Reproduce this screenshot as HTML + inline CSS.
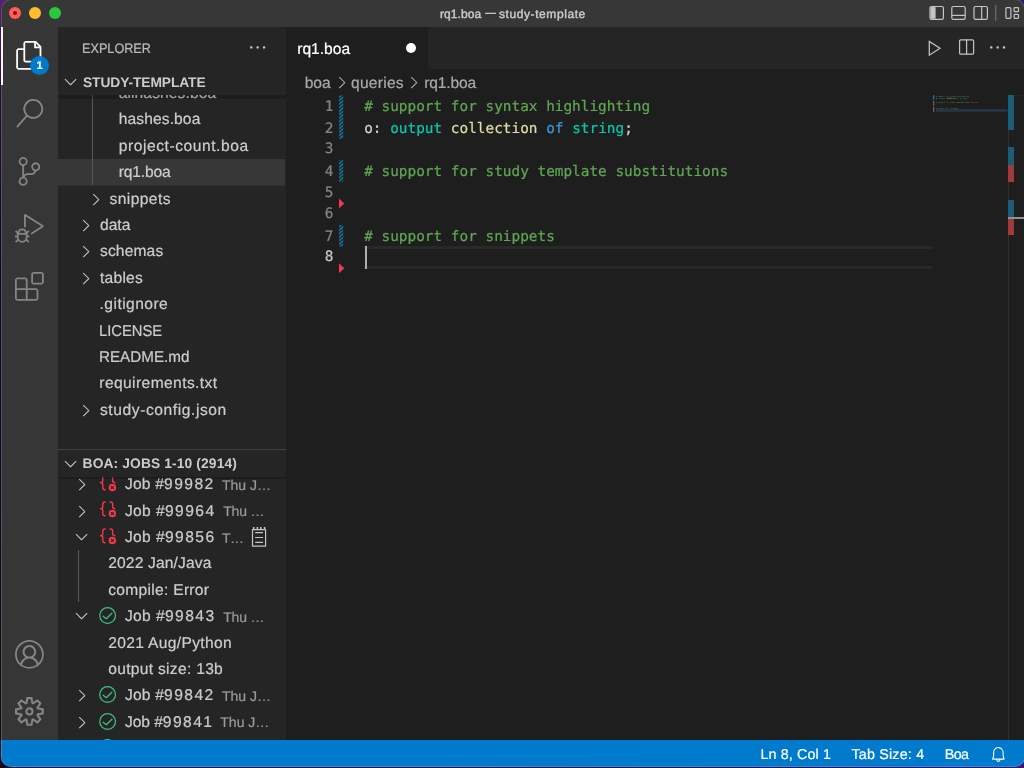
<!DOCTYPE html>
<html lang="en">
<head>
<meta charset="utf-8">
<title>rq1.boa — study-template</title>
<style>
*{box-sizing:border-box;margin:0;padding:0}
html,body{width:1024px;height:768px;overflow:hidden}
body{background:linear-gradient(180deg,#5c1b82 0%,#4a1570 4%,#2a0a45 12%,#16002a 35%,#120a1a 100%);font-family:"Liberation Sans",Arial,sans-serif;font-size:15.6px;color:#ccc;position:relative;-webkit-text-stroke:.22px;text-rendering:geometricPrecision}
.abs{position:absolute}
#win{position:absolute;left:1px;top:-1px;width:1024px;height:768px;border-radius:10px;overflow:hidden;background:#1e1e1e}
#w{left:-1px;top:1px;width:1024px;height:768px;will-change:transform}
#rim{position:absolute;left:1px;top:-1px;width:1024px;height:768px;border-radius:10px;box-shadow:inset 0 0 0 1px rgba(255,255,255,.16);pointer-events:none;z-index:50}
svg{position:absolute;overflow:visible}
.t{position:absolute;white-space:pre;line-height:20px;height:20px}
#title{left:0;top:-1px;width:1025px;height:28px;background:#373737}
#title>*{margin-top:1px}
.tl{position:absolute;top:7px;width:12px;height:12px;border-radius:50%}
.tt{top:3.6px;font-size:12px;letter-spacing:.1px;color:#ccc;-webkit-text-stroke:.4px #ccc}
#act{left:0;top:27px;width:58px;height:713px;background:#363636}
#side{left:58px;top:27px;width:228px;height:713px;background:#252526;overflow:hidden}
.row{position:absolute;left:0;width:228px;height:26.4px}
.row .t{top:1.4px;line-height:26.4px;height:26.4px}
.row.sel{background:#373738;width:227px}
.row .d{font-size:14px;color:#9a9a9a;top:1.1px}
.n{letter-spacing:1.45px}
.hdr{font-weight:700;font-size:13.8px;color:#ccc;-webkit-text-stroke:0}
.shadow{background:rgba(0,0,0,.2)}
#tabs{left:286px;top:27px;width:738px;height:42px;background:#252526}
#tab{left:0;top:0;width:142px;height:42px;background:#1e1e1e}
#crumbs{left:286px;top:69px;width:738px;height:26.4px;background:#1e1e1e;color:#a9a9a9}
#code{left:286px;top:95px;width:738px;height:645px;background:#1e1e1e}
.ln{position:absolute;left:-.5px;width:48px;text-align:right;font-family:"DejaVu Sans Mono","Liberation Mono",monospace;font-size:14.4px;color:#858585;line-height:21.6px;height:21.6px}
.cl{position:absolute;left:78.2px;font-family:"DejaVu Sans Mono","Liberation Mono",monospace;font-size:14.4px;line-height:21.6px;height:21.6px;white-space:pre;color:#d4d4d4}
.c{color:#60a754}.k{color:#08c8ac}.y{color:#e0dda4}.b{color:#3d98dc}
#status{left:0;top:740px;width:1024px;height:27px;background:#007acc;color:#fff;font-size:14.3px}
</style>
</head>
<body>
<div class="abs" style="left:1000px;top:0;width:24px;height:20px;background:#3a0a9a"></div>
<div class="abs" style="left:0;top:756px;width:1024px;height:12px;background:linear-gradient(90deg,#120a22 0%,#1c0a30 50%,#4a1068 100%)"></div>
<div id="win"><div id="w" class="abs">
  <div id="title" class="abs">
    <div class="tl" style="left:9px;background:#fe5f57"></div>
    <div class="tl" style="left:29px;background:#febc2e"></div>
    <div class="tl" style="left:49px;background:#28c840"></div>
    <div class="abs" style="left:13px;top:11px;width:4px;height:4px;border-radius:50%;background:#8c0b04"></div>
    <svg style="left:0;top:0" width="1024" height="27" viewBox="0 0 1024 27" fill="none" stroke="#c5c5c5" stroke-width="1.2">
      <rect x="930" y="6.5" width="13.4" height="12.8" rx="1.6"/><path d="M930.6 7.1h5v11.6h-5z" fill="#c5c5c5" stroke="none"/>
      <rect x="951.8" y="6.5" width="13.4" height="12.8" rx="1.6"/><path d="M951.8 15.4h13.4"/>
      <rect x="974" y="6.5" width="13.4" height="12.8" rx="1.6"/><path d="M981.7 6.5v12.8"/>
      <path d="M995.7 5v15.8" stroke="#6b6b6b" stroke-width="1.3"/>
      <rect x="1005.9" y="7.7" width="5" height="10.6" rx="1"/>
      <rect x="1014.1" y="7.7" width="4.4" height="4" rx=".8"/>
      <rect x="1014.1" y="14.3" width="4.4" height="4" rx=".8"/>
    </svg>
    <div class="t tt" style="left:439.9px">rq1.boa</div><div class="t tt" style="left:485.4px;font-size:10.3px;top:3.9px">—</div><div class="t tt" style="left:499px;letter-spacing:.58px">study-template</div>
  </div>
  <div id="act" class="abs">
    <div class="abs" style="left:1px;top:0;width:2px;height:58px;background:#fff"></div>
    <svg style="left:15.4px;top:14.4px" width="28.8" height="28.8" viewBox="0 0 24 24" fill="#fff"><path d="M17.5 0H8.5L7 1.5V6H2.5L1 7.5V22.57L2.5 24H14.57L16 22.57V18H20.7L22 16.57V4.5L17.5 0ZM17.5 2.12L19.88 4.5H17.5V2.12ZM14.5 22.5H2.5V7.5H7V16.57L8.5 18H14.5V22.5ZM20.5 16.5H8.5V1.5H16V6H20.5V16.5Z"/></svg>
    <div class="abs" style="left:30px;top:29px;width:19px;height:19px;border-radius:50%;background:#007acc"></div>
    <div class="t" style="left:30px;top:28.5px;width:19px;text-align:center;font-size:11px;font-weight:700;color:#fff">1</div>
    <svg style="left:15.4px;top:72px" width="28.8" height="28.8" viewBox="0 0 24 24" fill="#858585"><path d="M15.25 0a8.25 8.25 0 0 0-6.18 13.72L1 22.88l1.12 1 8.05-9.12A8.251 8.251 0 1 0 15.25.01V0zm0 15a6.75 6.75 0 1 1 0-13.5 6.75 6.75 0 0 1 0 13.5z"/></svg>
    <svg style="left:15.4px;top:129.6px" width="28.8" height="28.8" viewBox="0 0 24 24" fill="#858585"><path d="M21.007 8.222A3.738 3.738 0 0 0 15.045 5.2a3.737 3.737 0 0 0 1.156 6.583 2.988 2.988 0 0 1-2.668 1.67h-2.99a4.456 4.456 0 0 0-2.989 1.165V7.4a3.737 3.737 0 1 0-1.494 0v9.117a3.776 3.776 0 1 0 1.816.099 2.99 2.99 0 0 1 2.668-1.667h2.99a4.484 4.484 0 0 0 4.223-3.039 3.736 3.736 0 0 0 3.25-3.687zM4.565 3.738a2.242 2.242 0 1 1 4.484 0 2.242 2.242 0 0 1-4.484 0zm4.484 16.441a2.242 2.242 0 1 1-4.484 0 2.242 2.242 0 0 1 4.484 0zm8.221-9.715a2.242 2.242 0 1 1 0-4.485 2.242 2.242 0 0 1 0 4.485z"/></svg>
    <svg style="left:15.4px;top:187.2px" width="28.8" height="28.8" viewBox="0 0 24 24" fill="#858585"><path d="M10.94 13.5l-1.32 1.32a3.73 3.73 0 0 0-7.24 0L1.06 13.5 0 14.56l1.72 1.72-.22.22V18H0v1.5h1.5v.08c.077.489.214.966.41 1.42L0 22.94 1.06 24l1.65-1.65A4.308 4.308 0 0 0 6 24a4.31 4.31 0 0 0 3.29-1.65L10.94 24 12 22.94 10.09 21c.198-.464.336-.951.41-1.45v-.1H12V18h-1.5v-1.5l-.22-.22L12 14.5l-1.06-1zM6 13.5a2.25 2.25 0 0 1 2.25 2.25h-4.5A2.25 2.25 0 0 1 6 13.5zm3 6a3.33 3.33 0 0 1-3 3 3.33 3.33 0 0 1-3-3v-2.25h6v2.25zm14.76-9.9v1.26L13.5 17.37V15.6l8.5-5.37L9 2v9.46a5.07 5.07 0 0 0-1.5-.72V.63L8.64 0l15.12 9.6z"/></svg>
    <svg style="left:15.4px;top:244.8px" width="28.8" height="28.8" viewBox="0 0 24 24" fill="#858585"><path d="M13.5 1.5L15 0h7.5L24 1.5V9l-1.5 1.5H15L13.5 9V1.5zm1.5 0V9h7.5V1.5H15zM0 15V6l1.5-1.5H9L10.5 6v7.5H18l1.5 1.5v7.5L18 24H1.5L0 22.5V15zm9-1.5V6H1.5v7.5H9zM9 15H1.5v7.5H9V15zm1.5 7.5H18V15h-7.5v7.5z"/></svg>
    <svg style="left:15.4px;top:613px" width="28.8" height="28.8" viewBox="0 0 16 16" fill="#858585"><path d="M16 7.992C16 3.58 12.416 0 8 0S0 3.58 0 7.992c0 2.43 1.104 4.62 2.832 6.09.016.016.032.016.032.032.144.112.288.224.448.336.08.048.144.111.224.175A7.98 7.98 0 0 0 8.016 16a7.98 7.98 0 0 0 4.48-1.375c.08-.048.144-.111.224-.16.144-.111.304-.223.448-.335.016-.016.032-.016.032-.032 1.696-1.487 2.8-3.676 2.8-6.106zm-8 7.001c-1.504 0-2.88-.48-4.016-1.279.016-.128.048-.255.08-.383a4.17 4.17 0 0 1 .416-.991c.176-.304.384-.576.64-.816.24-.24.528-.463.816-.639.304-.176.624-.304.976-.4A4.15 4.15 0 0 1 8 10.342a4.185 4.185 0 0 1 2.928 1.166c.368.368.656.8.864 1.295.112.288.192.592.24.911A7.03 7.03 0 0 1 8 14.993zm-2.448-7.4a2.49 2.49 0 0 1-.208-1.024c0-.351.064-.703.208-1.023.144-.32.336-.607.576-.847.24-.24.528-.431.848-.575.32-.144.672-.208 1.024-.208.368 0 .704.064 1.024.208.32.144.608.336.848.575.24.24.432.528.576.847.144.32.208.672.208 1.023 0 .368-.064.704-.208 1.023a2.84 2.84 0 0 1-.576.848 2.84 2.84 0 0 1-.848.575 2.715 2.715 0 0 1-2.064 0 2.84 2.84 0 0 1-.848-.575 2.526 2.526 0 0 1-.56-.848zm7.424 5.306c0-.032-.016-.048-.016-.08a5.22 5.22 0 0 0-.688-1.406 4.883 4.883 0 0 0-1.088-1.135 5.207 5.207 0 0 0-1.04-.608 2.82 2.82 0 0 0 .464-.383 4.2 4.2 0 0 0 .624-.784 3.624 3.624 0 0 0 .528-1.934 3.71 3.71 0 0 0-.288-1.47 3.799 3.799 0 0 0-.816-1.199 3.845 3.845 0 0 0-1.2-.8 3.72 3.72 0 0 0-1.472-.287 3.72 3.72 0 0 0-1.472.288 3.631 3.631 0 0 0-1.2.815 3.84 3.84 0 0 0-.8 1.199 3.71 3.71 0 0 0-.288 1.47c0 .352.048.688.144 1.007.096.336.224.64.4.927.16.288.384.544.624.784.144.144.304.271.48.383a5.12 5.12 0 0 0-1.04.624c-.416.32-.784.703-1.088 1.119a4.999 4.999 0 0 0-.688 1.406c-.16.032-.16.064-.16.08C1.776 11.636.992 9.91.992 7.992.992 4.14 4.144.991 8 .991s7.008 3.149 7.008 7.001a6.96 6.96 0 0 1-2.032 4.907z"/></svg>
    <svg style="left:15.4px;top:669.8px" width="28.8" height="28.8" viewBox="0 0 24 24" fill="#858585" fill-rule="evenodd"><path d="M19.85 8.75l4.15.83v4.84l-4.15.83 2.35 3.52-3.43 3.43-3.52-2.35-.83 4.15H9.58l-.83-4.15-3.52 2.35-3.43-3.43 2.35-3.52L0 14.42V9.58l4.15-.83L1.8 5.23 5.23 1.8l3.52 2.35L9.58 0h4.84l.83 4.15 3.52-2.35 3.43 3.43-2.35 3.52zm-1.57 5.07l4-.81v-2l-4-.81-.54-1.3 2.29-3.43-1.43-1.43-3.43 2.29-1.3-.54-.81-4h-2l-.81 4-1.3.54-3.43-2.29-1.43 1.43L6.380 8.9l-.54 1.3-4 .81v2l4 .81.54 1.3-2.29 3.43 1.43 1.43 3.43-2.29 1.3.54.81 4h2l.81-4 1.3-.54 3.43 2.29 1.43-1.43-2.29-3.430.54-1.3zm-8.186-4.672A3.43 3.43 0 0 1 12 8.57 3.44 3.44 0 0 1 15.430 12a3.43 3.43 0 1 1-5.336-2.852zm.956 4.274c.281.188.612.288.95.288A1.7 1.7 0 0 0 13.710 12a1.71 1.71 0 1 0-2.660 1.422z"/></svg>
  </div>
  <div id="side" class="abs">
    <div class="t" style="left:24.2px;top:12px;font-size:13.7px;transform-origin:0 50%;transform:scaleX(.925);color:#bbb">EXPLORER</div>
    <svg style="left:191px;top:19.4px" width="17" height="3" viewBox="0 0 17 3" fill="#c5c5c5"><rect x="1.1" y=".3" width="2.3" height="2.3" rx=".7"/><rect x="7.5" y=".3" width="2.3" height="2.3" rx=".7"/><rect x="13.9" y=".3" width="2.3" height="2.3" rx=".7"/></svg>
    <div id="ex" class="abs" style="left:0;top:68.4px;width:228px;height:355px;overflow:hidden">
      <div class="row" style="top:-15.8px"><span class="t" style="left:60.70px;letter-spacing:0.1px">allhashes.boa</span></div><div class="row" style="top:10.6px"><span class="t" style="left:60.70px;letter-spacing:0.11px">hashes.boa</span></div><div class="row" style="top:37.0px"><span class="t" style="left:60.70px;letter-spacing:0.56px">project-count.boa</span></div><div class="row sel" style="top:63.4px"><span class="t" style="left:60.70px;letter-spacing:-0.17px">rq1.boa</span></div><div class="row" style="top:89.8px"><span class="t" style="left:51.60px;letter-spacing:0.4px">snippets</span></div><svg style="left:27.60px;top:94.20px" width="19.2" height="19.2" viewBox="0 0 16 16" fill="#c5c5c5"><path d="M10.072 8.024L5.715 3.667l.618-.62L11 7.716v.618L6.333 13l-.618-.619 4.357-4.357z"/></svg><div class="row" style="top:116.2px"><span class="t" style="left:42.00px">data</span></div><svg style="left:18.10px;top:120.60px" width="19.2" height="19.2" viewBox="0 0 16 16" fill="#c5c5c5"><path d="M10.072 8.024L5.715 3.667l.618-.62L11 7.716v.618L6.333 13l-.618-.619 4.357-4.357z"/></svg><div class="row" style="top:142.6px"><span class="t" style="left:42.00px;letter-spacing:0.13px">schemas</span></div><svg style="left:18.10px;top:147.00px" width="19.2" height="19.2" viewBox="0 0 16 16" fill="#c5c5c5"><path d="M10.072 8.024L5.715 3.667l.618-.62L11 7.716v.618L6.333 13l-.618-.619 4.357-4.357z"/></svg><div class="row" style="top:169.0px"><span class="t" style="left:42.00px;letter-spacing:0.24px">tables</span></div><svg style="left:18.10px;top:173.40px" width="19.2" height="19.2" viewBox="0 0 16 16" fill="#c5c5c5"><path d="M10.072 8.024L5.715 3.667l.618-.62L11 7.716v.618L6.333 13l-.618-.619 4.357-4.357z"/></svg><div class="row" style="top:195.4px"><span class="t" style="left:41.60px;letter-spacing:0.44px">.gitignore</span></div><div class="row" style="top:221.8px"><span class="t" style="left:41.30px;transform-origin:0 50%;transform:scaleX(0.947)">LICENSE</span></div><div class="row" style="top:248.2px"><span class="t" style="left:41.30px;transform-origin:0 50%;transform:scaleX(0.975)">README.md</span></div><div class="row" style="top:274.6px"><span class="t" style="left:41.30px;letter-spacing:0.4px">requirements.txt</span></div><div class="row" style="top:301.0px"><span class="t" style="left:42.00px;letter-spacing:0.575px">study-config.json</span></div><svg style="left:18.10px;top:305.40px" width="19.2" height="19.2" viewBox="0 0 16 16" fill="#c5c5c5"><path d="M10.072 8.024L5.715 3.667l.618-.62L11 7.716v.618L6.333 13l-.618-.619 4.357-4.357z"/></svg>
      <div class="abs" style="left:34px;top:0;width:1px;height:89.8px;background:#585858"></div>
      <div class="abs" style="left:1px;top:89.6px;width:226px;height:1px;background:#2b2e38"></div>
      <div class="abs shadow" style="left:1px;top:-.4px;width:227px;height:3.8px"></div>
    </div>
    <div class="abs" style="left:0;top:42px;width:228px;height:26.4px;background:#252526">
      <svg style="left:3.40px;top:3.10px" width="19.2" height="19.2" viewBox="0 0 16 16" fill="#c5c5c5"><path d="M7.976 10.072l4.357-4.357.62.618L8.284 11h-.618L3 6.333l.619-.618 4.357 4.357z"/></svg>
      <span class="t hdr" style="left:25px;top:3.6px;letter-spacing:-.1px">STUDY-TEMPLATE</span>
    </div>
    <div id="jb" class="abs" style="left:0;top:449.8px;width:228px;height:263.2px;overflow:hidden">
      <div class="row" style="top:-6.0px"><span class="t" style="left:66.90px;letter-spacing:0.2px">Job #<span class="n">99982</span></span><span class="t d" style="left:164.00px">Thu J…</span></div><svg style="left:13.70px;top:-1.50px" width="19.2" height="19.2" viewBox="0 0 16 16" fill="#c5c5c5"><path d="M10.072 8.024L5.715 3.667l.618-.62L11 7.716v.618L6.333 13l-.618-.619 4.357-4.357z"/></svg><svg style="left:40.20px;top:-2.70px" width="19.2" height="19.2" viewBox="0 0 16 16"><g fill="none" stroke="#f2384c" stroke-width="1.15" stroke-linecap="round" stroke-linejoin="round"><path d="M5.9 1.7C4.6 1.7 4 2.300 4 3.400v2.300c0 .9-.6 1.500-1.800 1.600 1.200.100 1.800.700 1.800 1.600v2.500c0 1.100.6 1.700 1.900 1.700"/><path d="M10.100 1.700c1.300 0 2.100.600 2.100 1.700v2.300c0 .9.600 1.500 1.800 1.600"/></g><circle cx="12" cy="11.250" r="3.100" fill="#f2384c"/><path d="M10.850 10.100l2.300 2.300m0-2.300l-2.300 2.300" stroke="#252526" stroke-width=".9" fill="none"/></svg><div class="row" style="top:20.4px"><span class="t" style="left:66.90px;letter-spacing:0.38px">Job #<span class="n">99964</span></span><span class="t d" style="left:165.20px;letter-spacing:-0.2px">Thu …</span></div><svg style="left:13.70px;top:24.90px" width="19.2" height="19.2" viewBox="0 0 16 16" fill="#c5c5c5"><path d="M10.072 8.024L5.715 3.667l.618-.62L11 7.716v.618L6.333 13l-.618-.619 4.357-4.357z"/></svg><svg style="left:40.20px;top:23.70px" width="19.2" height="19.2" viewBox="0 0 16 16"><g fill="none" stroke="#f2384c" stroke-width="1.15" stroke-linecap="round" stroke-linejoin="round"><path d="M5.9 1.7C4.6 1.7 4 2.300 4 3.400v2.300c0 .9-.6 1.500-1.800 1.600 1.200.100 1.800.700 1.800 1.600v2.500c0 1.100.6 1.700 1.900 1.700"/><path d="M10.100 1.700c1.300 0 2.100.600 2.100 1.700v2.300c0 .9.600 1.500 1.800 1.600"/></g><circle cx="12" cy="11.250" r="3.100" fill="#f2384c"/><path d="M10.850 10.100l2.300 2.300m0-2.300l-2.300 2.300" stroke="#252526" stroke-width=".9" fill="none"/></svg><div class="row" style="top:46.8px"><span class="t" style="left:66.90px;letter-spacing:0.38px">Job #<span class="n">99856</span></span><span class="t d" style="left:164.00px;letter-spacing:-0.6px">T…</span></div><svg style="left:13.80px;top:50.50px" width="19.2" height="19.2" viewBox="0 0 16 16" fill="#c5c5c5"><path d="M7.976 10.072l4.357-4.357.62.618L8.284 11h-.618L3 6.333l.619-.618 4.357 4.357z"/></svg><svg style="left:40.20px;top:50.10px" width="19.2" height="19.2" viewBox="0 0 16 16"><g fill="none" stroke="#f2384c" stroke-width="1.15" stroke-linecap="round" stroke-linejoin="round"><path d="M5.9 1.7C4.6 1.7 4 2.300 4 3.400v2.300c0 .9-.6 1.500-1.800 1.600 1.200.100 1.800.700 1.800 1.600v2.500c0 1.100.6 1.700 1.900 1.700"/><path d="M10.100 1.700c1.300 0 2.100.600 2.100 1.700v2.300c0 .9.600 1.500 1.800 1.600"/></g><circle cx="12" cy="11.250" r="3.100" fill="#f2384c"/><path d="M10.850 10.100l2.300 2.300m0-2.300l-2.300 2.300" stroke="#252526" stroke-width=".9" fill="none"/></svg><svg style="left:192.00px;top:48.80px" width="20" height="22" viewBox="0 0 20 22" fill="none" stroke="#c5c5c5" stroke-width="1.2"><path d="M2.5 3.7h13.1v16.4h-13.1z" stroke-linejoin="round"/><path d="M3.700 3.700v-2.600M7.400 3.700v-2.600M10.800 3.700v-2.600M14.600 3.700v-2.600" stroke-width="1.500"/><path d="M5.200 6.700h7.800M5.200 11.500h7.800M5.200 16.400h7.800"/></svg><div class="row" style="top:73.2px"><span class="t" style="left:50.20px;letter-spacing:0.15px">2022 Jan/Java</span></div><div class="row" style="top:99.6px"><span class="t" style="left:50.20px;letter-spacing:0.29px">compile: Error</span></div><div class="row" style="top:126.0px"><span class="t" style="left:66.90px;letter-spacing:0.38px">Job #<span class="n">99843</span></span><span class="t d" style="left:165.20px;letter-spacing:-0.2px">Thu …</span></div><svg style="left:13.80px;top:129.70px" width="19.2" height="19.2" viewBox="0 0 16 16" fill="#c5c5c5"><path d="M7.976 10.072l4.357-4.357.62.618L8.284 11h-.618L3 6.333l.619-.618 4.357 4.357z"/></svg><svg style="left:40.00px;top:129.30px" width="19.2" height="19.2" viewBox="0 0 16 16" fill="none" stroke="#40bf80" stroke-width="1.05"><circle cx="8" cy="8" r="6.55"/><path d="M4.3 8.5l2.6 2.1 4.7-4.6" stroke-linecap="round" stroke-linejoin="round"/></svg><div class="row" style="top:152.4px"><span class="t" style="left:50.20px;letter-spacing:0.34px">2021 Aug/Python</span></div><div class="row" style="top:178.8px"><span class="t" style="left:50.20px;letter-spacing:0.3px">output size: 13b</span></div><div class="row" style="top:205.2px"><span class="t" style="left:66.90px;letter-spacing:0.2px">Job #<span class="n">99842</span></span><span class="t d" style="left:164.00px">Thu J…</span></div><svg style="left:13.70px;top:209.70px" width="19.2" height="19.2" viewBox="0 0 16 16" fill="#c5c5c5"><path d="M10.072 8.024L5.715 3.667l.618-.62L11 7.716v.618L6.333 13l-.618-.619 4.357-4.357z"/></svg><svg style="left:40.00px;top:208.50px" width="19.2" height="19.2" viewBox="0 0 16 16" fill="none" stroke="#40bf80" stroke-width="1.05"><circle cx="8" cy="8" r="6.55"/><path d="M4.3 8.5l2.6 2.1 4.7-4.6" stroke-linecap="round" stroke-linejoin="round"/></svg><div class="row" style="top:231.6px"><span class="t" style="left:66.90px;letter-spacing:-0.05px">Job #<span class="n">99841</span></span><span class="t d" style="left:162.30px">Thu J…</span></div><svg style="left:13.70px;top:236.10px" width="19.2" height="19.2" viewBox="0 0 16 16" fill="#c5c5c5"><path d="M10.072 8.024L5.715 3.667l.618-.62L11 7.716v.618L6.333 13l-.618-.619 4.357-4.357z"/></svg><svg style="left:40.00px;top:234.90px" width="19.2" height="19.2" viewBox="0 0 16 16" fill="none" stroke="#40bf80" stroke-width="1.05"><circle cx="8" cy="8" r="6.55"/><path d="M4.3 8.5l2.6 2.1 4.7-4.6" stroke-linecap="round" stroke-linejoin="round"/></svg><div class="row" style="top:258.0px"><span class="t" style="left:66.90px;letter-spacing:0.15px">Job #<span class="n">99840</span></span><span class="t d" style="left:164.00px">Thu J…</span></div><svg style="left:13.70px;top:262.50px" width="19.2" height="19.2" viewBox="0 0 16 16" fill="#c5c5c5"><path d="M10.072 8.024L5.715 3.667l.618-.62L11 7.716v.618L6.333 13l-.618-.619 4.357-4.357z"/></svg><svg style="left:40.00px;top:261.30px" width="19.2" height="19.2" viewBox="0 0 16 16" fill="none" stroke="#40bf80" stroke-width="1.05"><circle cx="8" cy="8" r="6.55"/><path d="M4.3 8.5l2.6 2.1 4.7-4.6" stroke-linecap="round" stroke-linejoin="round"/></svg>
      <div class="abs" style="left:20px;top:73.2px;width:1px;height:52.4px;background:#585858"></div>
      <div class="abs shadow" style="left:1px;top:-.7px;width:227px;height:2.7px"></div>
    </div>
    <div class="abs" style="left:0;top:422px;width:228px;height:27.8px;background:#252526;border-top:1px solid #3f3f40">
      <svg style="left:3.40px;top:3.70px" width="19.2" height="19.2" viewBox="0 0 16 16" fill="#c5c5c5"><path d="M7.976 10.072l4.357-4.357.62.618L8.284 11h-.618L3 6.333l.619-.618 4.357 4.357z"/></svg>
      <span class="t hdr" style="left:24.6px;top:4.2px;letter-spacing:.12px">BOA: JOBS 1-10 (2914)</span>
    </div>
  </div>
  <div id="tabs" class="abs">
    <div id="tab" class="abs">
      <span class="t" style="left:11.2px;top:12.9px;letter-spacing:0;color:#fff">rq1.boa</span>
      <div class="abs" style="left:120.3px;top:16.2px;width:10px;height:10px;border-radius:50%;background:#fff"></div>
    </div>
    <svg style="left:640px;top:11px" width="20" height="20" viewBox="0 0 20 20" fill="none" stroke="#c5c5c5" stroke-width="1.25"><path d="M3.3 3.4v13.8l10.700-6.900z"/></svg>
    <svg style="left:672.5px;top:12.4px" width="16" height="16" viewBox="0 0 16 16" fill="none" stroke="#c5c5c5" stroke-width="1.2"><rect x=".6" y=".8" width="14" height="14.400" rx="1.300"/><path d="M7.600 .800v14.400"/></svg>
    <svg style="left:702.6px;top:19.4px" width="17" height="3" viewBox="0 0 17 3" fill="#c5c5c5"><rect x="1.1" y=".3" width="2.3" height="2.3" rx=".7"/><rect x="7.5" y=".3" width="2.3" height="2.3" rx=".7"/><rect x="13.9" y=".3" width="2.3" height="2.3" rx=".7"/></svg>
  </div>
  <div id="crumbs" class="abs">
    <span class="t" style="left:18.70px;top:4.9px">boa</span>
    <svg style="left:45.60px;top:4.00px" width="19.2" height="19.2" viewBox="0 0 16 16" fill="#a9a9a9"><path d="M10.072 8.024L5.715 3.667l.618-.62L11 7.716v.618L6.333 13l-.618-.619 4.357-4.357z"/></svg>
    <span class="t" style="left:65.00px;letter-spacing:0.25px;top:4.9px">queries</span>
    <svg style="left:118.20px;top:4.00px" width="19.2" height="19.2" viewBox="0 0 16 16" fill="#a9a9a9"><path d="M10.072 8.024L5.715 3.667l.618-.62L11 7.716v.618L6.333 13l-.618-.619 4.357-4.357z"/></svg>
    <span class="t" style="left:138.20px;letter-spacing:-0.17px;top:4.9px">rq1.boa</span>
  </div>
  <div id="code" class="abs">
    <svg style="left:0;top:0" width="738" height="645"><defs><pattern id="st" width="4.25" height="3.5" patternUnits="userSpaceOnUse"><path d="M-1 4.8L5.25 -.45M-1 8.3L5.25 3.05M-1 1.3L5.25 -3.95" stroke="#1185b8" stroke-width="1.25" fill="none"/></pattern></defs>
    <rect x="53" y="0.4" width="4.25" height="43.2" fill="url(#st)"/>
    <rect x="53" y="65.2" width="4.25" height="21.6" fill="url(#st)"/>
    <rect x="53" y="130.0" width="4.25" height="21.6" fill="url(#st)"/>
    <path d="M53 103.4L58.3 108.4L53 113.4z" fill="#f2384c"/>
    <path d="M53 168.2L58.3 173.2L53 178.2z" fill="#f2384c"/>
    </svg>
    <div class="abs" style="left:78.4px;top:151px;width:567.6px;height:23px;border:solid #292929;border-width:3px 0"></div>
    <div class="abs" style="left:78.5px;top:151.2px;width:2.1px;height:22.5px;background:#aeafad"></div>
    <div class="ln" style="top:1.7px">1</div>
    <div class="cl" style="top:1.7px"><span class="c"># support for syntax highlighting</span></div>
    <div class="ln" style="top:23.9px">2</div>
    <div class="cl" style="top:23.9px">o: <span class="k">output</span> <span class="y">collection</span> <span class="b">of</span> <span class="k">string</span>;</div>
    <div class="ln" style="top:44.4px">3</div>
    <div class="ln" style="top:66.5px">4</div>
    <div class="cl" style="top:66.5px"><span class="c"># support for study template substitutions</span></div>
    <div class="ln" style="top:87.6px">5</div>
    <div class="ln" style="top:109.2px">6</div>
    <div class="ln" style="top:131.9px">7</div>
    <div class="cl" style="top:131.9px"><span class="c"># support for snippets</span></div>
    <div class="ln" style="top:152.4px;color:#c6c6c6">8</div>
    </div>
  <div id="mini" class="abs" style="left:0;top:0;width:1024px;height:768px;pointer-events:none">
  <div class="abs" style="left:1008px;top:95.4px;width:1px;height:644.6px;background:#303031"></div>
  <div class="abs" style="left:1009px;top:95.4px;width:15px;height:1px;background:#262626"></div>
  <div class="abs" style="left:1008px;top:95.4px;width:6px;height:34.6px;background:#1c5c77"></div>
  <div class="abs" style="left:1008px;top:147.2px;width:6px;height:17.8px;background:#1c5c77"></div>
  <div class="abs" style="left:1008px;top:165px;width:6px;height:17.4px;background:#a13a3c"></div>
  <div class="abs" style="left:1008px;top:199.8px;width:6px;height:17.2px;background:#1c5c77"></div>
  <div class="abs" style="left:1008px;top:219px;width:6px;height:15.8px;background:#a13a3c"></div>
  <div class="abs" style="left:1008px;top:217px;width:16px;height:2px;background:#939393"></div>
  <svg style="left:0;top:0" width="1024" height="768"><rect x="936" y="109.3" width="71.6" height="2.4" fill="#26384b"/><rect x="933" y="95.2" width="1.3" height="4.4" fill="#1b81a8"/><rect x="933" y="101" width="1.3" height="2.7" fill="#1b81a8"/><rect x="933" y="103.7" width="1.3" height="1.9" fill="#d6383f"/><rect x="933" y="106.9" width="1.3" height="3.1" fill="#1b81a8"/><rect x="933" y="110" width="1.3" height="1.9" fill="#d6383f"/></svg>
  <div class="abs" style="left:936px;top:95.9px;width:600px;height:200px;transform-origin:0 0;transform:scale(.1157,.105);opacity:1">
  <div class="cl" style="left:0;top:-1.5px"><span class="c"># support for syntax highlighting</span></div>
  <div class="cl" style="left:0;top:17.6px">o: <span class="k">output</span> <span class="y">collection</span> <span class="b">of</span> <span class="k">string</span>;</div>
  <div class="cl" style="left:0;top:55.7px"><span class="c"># support for study template substitutions</span></div>
  <div class="cl" style="left:0;top:112.8px"><span class="c"># support for snippets</span></div>
  </div></div>
  <div id="status" class="abs">
    <span class="t" style="left:760.50px;letter-spacing:0.13px;top:4.6px">Ln 8, Col 1</span>
    <span class="t" style="left:851.40px;letter-spacing:0.2px;top:4.6px">Tab Size: 4</span>
    <span class="t" style="left:944.80px;letter-spacing:-0.7px;top:4.6px">Boa</span>
    <svg style="left:989.60px;top:5.80px" width="16.8" height="16.8" viewBox="0 0 16 16" fill="#fff"><path d="M13.377 10.573a7.63 7.63 0 0 1-.383-2.38V6.195a5.115 5.115 0 0 0-1.268-3.446 5.138 5.138 0 0 0-3.242-1.722c-.694-.072-1.4 0-2.07.227-.67.215-1.28.574-1.794 1.053a4.923 4.923 0 0 0-1.208 1.675 5.067 5.067 0 0 0-.431 2.022v2.2a7.61 7.61 0 0 1-.383 2.37L2 12.343l.479.658h3.505c0 .526.215 1.04.586 1.412.37.37.885.586 1.412.586.526 0 1.04-.215 1.411-.586s.587-.886.587-1.412h3.505l.478-.658-.586-1.77zm-4.69 3.147a.997.997 0 0 1-.705.299.997.997 0 0 1-.706-.3.997.997 0 0 1-.3-.705h1.999a.939.939 0 0 1-.287.706zm-5.515-1.71l.371-1.114a8.633 8.633 0 0 0 .443-2.691V6.004c0-.563.12-1.113.347-1.616.227-.514.55-.969.969-1.34.419-.382.91-.67 1.436-.837.538-.18 1.1-.24 1.65-.18a4.147 4.147 0 0 1 2.597 1.4 4.133 4.133 0 0 1 1.004 2.776v2.01c0 .909.144 1.818.443 2.691l.371 1.113h-9.63v-.012z"/></svg>
  </div>
</div></div>
<div id="rim"></div>
</body>
</html>
